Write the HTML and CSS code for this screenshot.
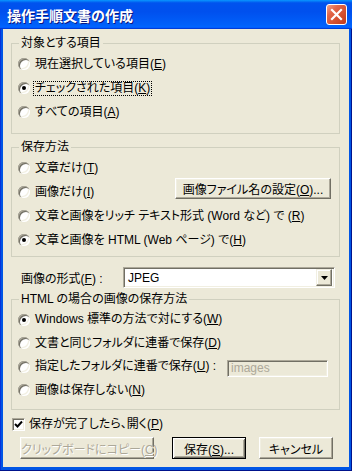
FILE: index.html
```html
<!DOCTYPE html>
<html lang="ja">
<head>
  <meta charset="UTF-8">
  <title>操作手順文書の作成</title>
  <link rel="stylesheet" href="styles.css">
</head>
<body>

  <div class="window">
    <div class="title-bar">
      <span class="title">操作手順文書の作成</span>
      <span class="close-btn">
        <svg width="19" height="19" viewBox="0 0 19 19"><path d="M5 5 L14 14 M14 5 L5 14" stroke="#fff" stroke-width="2.2" stroke-linecap="square"/></svg>
      </span>
    </div>

    <div class="client">
      <fieldset class="group group-target">
        <legend>対象とする項目</legend>
        <div class="option"><span class="radio"></span><span class="text">現在選択している項目(<u>E</u>)</span></div>
        <div class="option"><span class="radio checked"></span><span class="text focused">チェックされた項目(<u>K</u>)</span></div>
        <div class="option"><span class="radio"></span><span class="text">すべての項目(<u>A</u>)</span></div>
      </fieldset>

      <fieldset class="group group-method">
        <legend>保存方法</legend>
        <div class="option"><span class="radio"></span><span class="text">文章だけ(<u>T</u>)</span></div>
        <div class="option"><span class="radio"></span><span class="text">画像だけ(<u>I</u>)</span>
          <button class="btn btn-names">画像ファイル名の設定(<u>O</u>)...</button>
        </div>
        <div class="option"><span class="radio"></span><span class="text">文章と画像をリッチ テキスト形式 (Word など) で (<u>R</u>)</span></div>
        <div class="option"><span class="radio checked"></span><span class="text">文章と画像を HTML (Web ページ) で(<u>H</u>)</span></div>
      </fieldset>

      <div class="format-row">
        <span class="format-label">画像の形式(<u>F</u>) :</span>
        <div class="combo">
          <span class="combo-value">JPEG</span>
          <span class="combo-btn"><svg width="7" height="4" viewBox="0 0 7 4"><polygon points="0,0 7,0 3.5,4" fill="#000"/></svg></span>
        </div>
      </div>

      <fieldset class="group group-html">
        <legend>HTML の場合の画像の保存方法</legend>
        <div class="option"><span class="radio checked"></span><span class="text">Windows 標準の方法で対にする(<u>W</u>)</span></div>
        <div class="option"><span class="radio"></span><span class="text">文書と同じフォルダに連番で保存(<u>D</u>)</span></div>
        <div class="option"><span class="radio"></span><span class="text">指定したフォルダに連番で保存(<u>U</u>) :</span>
          <span class="field disabled">images</span>
        </div>
        <div class="option"><span class="radio"></span><span class="text">画像は保存しない(<u>N</u>)</span></div>
      </fieldset>

      <div class="check-row">
        <span class="checkbox"><svg width="11" height="11" viewBox="0 0 11 11"><polyline points="2,5 4.5,7.5 9,2.5" fill="none" stroke="#000" stroke-width="2"/></svg></span>
        <span class="text">保存が完了したら、開く(<u>P</u>)</span>
      </div>

      <div class="button-row">
        <button class="btn btn-copy" disabled>クリップボードにコピー(<u>C</u>)</button>
        <button class="btn btn-save default">保存(<u>S</u>)...</button>
        <button class="btn btn-cancel">キャンセル</button>
      </div>
    </div>
  </div>

</body>
</html>
```

FILE: styles.css
```css
* {
  box-sizing: border-box;
}

body {
  margin: 0;
  padding: 0;
  font-family: "Liberation Sans", "Noto Sans CJK JP", sans-serif;
  font-size: 12px;
  color: #000;
  font-feature-settings: "palt";
}

u {
  text-decoration: underline;
  text-underline-offset: 1px;
}

.window {
  width: 352px;
  height: 471px;
  display: flex;
  flex-direction: column;
  background-color: #0055e5;
  box-shadow: inset -1px -1px 0 #00138c, inset 1px 0 0 #0831d9;
}

.title-bar {
  flex: none;
  height: 29px;
  display: flex;
  align-items: center;
  justify-content: space-between;
  padding: 0 5px 0 7px;
  background: linear-gradient(180deg, #0997ff, #0053ee 10%, #0050ee 40%, #0060fa 85%, #0066ff 93%, #005bff 95%, #003dd7 97%, #003dd7);
}

.title {
  color: #fff;
  font-weight: bold;
  font-size: 14px;
  font-feature-settings: normal;
  text-shadow: 1px 1px 0 #0a1883;
}

.close-btn {
  width: 21px;
  height: 21px;
  display: flex;
  align-items: center;
  justify-content: center;
  border: 1px solid #fff;
  border-radius: 3px;
  background: linear-gradient(135deg, #f2a58c 0%, #e3674a 30%, #d4502f 65%, #c13a1b 100%);
}

.client {
  flex: 1;
  margin: 0 3px 4px;
  padding: 0 9px 0 8px;
  background-color: #ece9d8;
  display: flex;
  flex-direction: column;
}

.group {
  margin: 0;
  min-width: 0;
  padding: 2px 6px 9px;
  border: 1px solid #d0d0bf;
}

.group legend {
  margin-left: 1px;
  padding: 0 2px;
  line-height: 14px;
}

.group-target {
  margin-top: 7px;
}

.group-method {
  margin-top: 6px;
  padding-bottom: 4px;
}

.group-html {
  margin-top: 4px;
  padding-bottom: 7px;
}

.option {
  height: 24px;
  display: flex;
  align-items: center;
}

.group-html .option {
  height: 23.5px;
}

.radio {
  flex: none;
  width: 12px;
  height: 12px;
  margin-right: 3px;
  border-radius: 50%;
  background-color: #fff;
  box-shadow: inset 1px 1px 0 #aca899, inset 2px 2px 0 #716f64, inset -1px -1px 0 #fff, inset -2px -2px 0 #f1efe2;
  display: flex;
  align-items: center;
  justify-content: center;
}

.radio.checked::after {
  content: "";
  width: 4px;
  height: 4px;
  border-radius: 50%;
  background-color: #000;
}

.text {
  padding: 0 1px;
  border: 1px dotted transparent;
  line-height: 13px;
  white-space: nowrap;
}

.text.focused {
  border-color: #000;
}

.btn {
  font-family: inherit;
  font-size: 12px;
  font-feature-settings: "palt";
  color: #000;
  height: 22px;
  padding: 0;
  background-color: #ece9d8;
  border: 1px solid;
  border-color: #fff #716f64 #716f64 #fff;
  box-shadow: inset -1px -1px 0 #aca899, inset 1px 1px 0 #f1efe2;
  white-space: nowrap;
}

.btn.default {
  border-color: #000;
  box-shadow: inset 1px 1px 0 #fff, inset -1px -1px 0 #716f64, inset 2px 2px 0 #f1efe2, inset -2px -2px 0 #aca899;
}

.btn:disabled {
  color: #aca899;
  text-shadow: 1px 1px 0 #fff;
}

.btn-names {
  width: 156px;
  height: 21px;
  margin-left: auto;
  margin-right: 2px;
  margin-bottom: 7px;
}

.format-row {
  margin-top: 10px;
  padding-left: 10px;
  display: flex;
  align-items: center;
}

.format-label {
  flex: none;
  width: 102px;
}

.combo {
  width: 212px;
  height: 21px;
  display: flex;
  align-items: center;
  padding: 2px;
  background-color: #fff;
  border: 1px solid;
  border-color: #aca899 #fff #fff #aca899;
  box-shadow: inset 1px 1px 0 #716f64, inset -1px -1px 0 #f1efe2;
}

.combo-value {
  flex: 1;
  padding-left: 2px;
}

.combo-btn {
  width: 16px;
  height: 17px;
  display: flex;
  align-items: center;
  justify-content: center;
  background-color: #ece9d8;
  border: 1px solid;
  border-color: #f1efe2 #716f64 #716f64 #f1efe2;
  box-shadow: inset -1px -1px 0 #aca899, inset 1px 1px 0 #fff;
}

.field {
  width: 101px;
  height: 17px;
  margin-left: auto;
  margin-right: 5px;
  margin-top: 4px;
  padding: 1px 3px;
  line-height: 13px;
  border: 1px solid;
  border-color: #aca899 #fff #fff #aca899;
  box-shadow: inset 1px 1px 0 #716f64, inset -1px -1px 0 #f1efe2;
}

.field.disabled {
  color: #aca899;
  background-color: #ece9d8;
}

.check-row {
  margin-top: 8px;
  height: 13px;
  padding-left: 1px;
  display: flex;
  align-items: center;
}

.checkbox {
  flex: none;
  width: 13px;
  height: 13px;
  margin-right: 2px;
  display: flex;
  align-items: center;
  justify-content: center;
  background-color: #fff;
  border: 1px solid;
  border-color: #aca899 #fff #fff #aca899;
  box-shadow: inset 1px 1px 0 #716f64, inset -1px -1px 0 #f1efe2;
}

.button-row {
  margin-top: 6px;
  padding-left: 9px;
  display: flex;
}

.btn-copy {
  width: 134px;
}

.btn-save {
  width: 74px;
  margin-left: 18px;
}

.btn-cancel {
  width: 74px;
  margin-left: 13px;
}
```
